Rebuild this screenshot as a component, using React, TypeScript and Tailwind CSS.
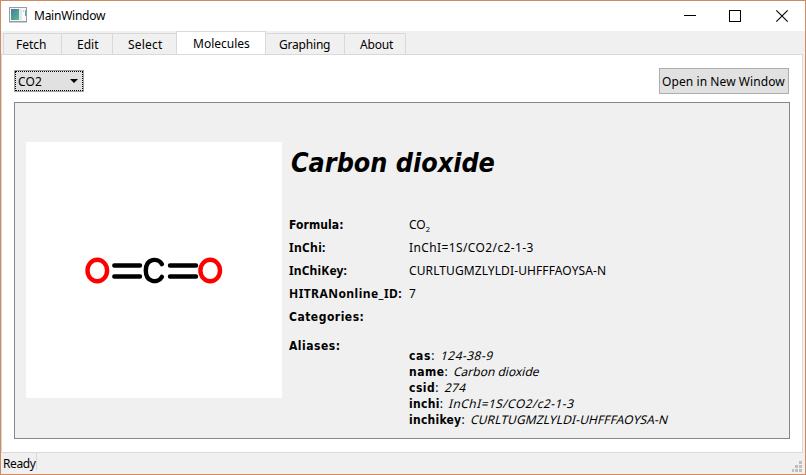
import React from "react";

const tabs = [
  { label: "Fetch", box: "w-[58px] pl-[12px]", text: "" },
  { label: "Edit", box: "w-[51px] pl-[15px]", text: "" },
  { label: "Select", box: "w-[64px] pl-[15px]", text: "tracking-[0.2px]" },
  { label: "Molecules", box: "w-[90px] pl-[16px]", text: "", active: true },
  { label: "Graphing", box: "w-[79px] pl-[13px]", text: "tracking-[-0.2px]" },
  { label: "About", box: "w-[61px] pl-[15px]", text: "tracking-[-0.2px]" },
];

const condensed = "font-['DejaVu_Sans_Condensed','DejaVu_Sans',sans-serif]";

const fields = [
  { label: "Formula:", labelCls: `${condensed} tracking-[0.1px]`, value: <>CO<span className="relative top-[3px] text-[7.5px]">2</span></>, valueCls: "" },
  { label: "InChi:", labelCls: "tracking-[0.3px]", value: "InChI=1S/CO2/c2-1-3", valueCls: "tracking-[0.39px]" },
  { label: "InChiKey:", labelCls: "tracking-[0.15px]", value: "CURLTUGMZLYLDI-UHFFFAOYSA-N", valueCls: "tracking-[0.11px]" },
  { label: "HITRANonline_ID:", labelCls: "tracking-[0.45px]", value: "7", valueCls: "" },
  { label: "Categories:", labelCls: `${condensed} tracking-[0.5px]`, value: "", valueCls: "" },
];

const aliases = [
  { name: "cas", value: "124-38-9", nameCls: "tracking-[0.7px]", valueCls: "tracking-[0.45px]" },
  { name: "name", value: "Carbon dioxide", nameCls: "tracking-[0.5px]", valueCls: "" },
  { name: "csid", value: "274", nameCls: "tracking-[0.5px]", valueCls: "tracking-[0.2px]" },
  { name: "inchi", value: "InChI=1S/CO2/c2-1-3", nameCls: "tracking-[0.3px]", valueCls: "tracking-[0.42px]" },
  { name: "inchikey", value: "CURLTUGMZLYLDI-UHFFFAOYSA-N", nameCls: "tracking-[0.25px]", valueCls: "tracking-[0.11px]" },
];

function AppIcon() {
  return (
    <svg width="20" height="17" viewBox="0 0 20 17" shapeRendering="crispEdges">
      <defs>
        <linearGradient id="screen" x1="0" y1="0" x2="1" y2="1">
          <stop offset="0" stopColor="#467ba5" />
          <stop offset="1" stopColor="#5cb88a" />
        </linearGradient>
      </defs>
      <rect x="1.5" y="0.5" width="17" height="14" fill="#f4f6f8" stroke="#9a9da0" />
      <rect x="1" y="15" width="18" height="1" fill="#c8cbd0" />
      <rect x="3" y="2" width="8" height="11" fill="url(#screen)" />
      <rect x="11" y="2" width="3" height="11" fill="#e1e8ee" />
      <rect x="14" y="2" width="4" height="11" fill="#f8fafb" />
      <rect x="15" y="3" width="1" height="2" fill="#b7d3d2" />
      <rect x="17" y="3" width="1" height="6" fill="#62a89a" />
    </svg>
  );
}

function TitleBar() {
  return (
    <header className="flex h-[30px] shrink-0 items-start bg-white">
      <div className="pt-[6px] pl-[7px]"><AppIcon /></div>
      <span className="mt-[5px] ml-[6px] text-[12px] leading-[20px] tracking-[-0.25px]">MainWindow</span>
      <svg className="mt-[8px] mr-[15px] ml-auto" width="106" height="14" viewBox="0 0 106 14" fill="none" stroke="#000">
        <path d="M0 6.5h12" shapeRendering="crispEdges" />
        <path d="M45.5 1.5h11v11h-11z" shapeRendering="crispEdges" />
        <path d="M92.3 1.3l11.4 11.4M103.7 1.3L92.3 12.7" strokeWidth="1.1" />
      </svg>
    </header>
  );
}

function TabBar() {
  return (
    <nav className="flex h-[23px] shrink-0 items-end bg-[#f0f0f0] pl-px">
      {tabs.map((t, i) =>
        t.active ? (
          <div key={t.label} className={`${t.box} -mb-px h-[24px] border border-b-0 border-[#d9d9d9] bg-white text-[12px] leading-[23px]`}>
            <span className={t.text}>{t.label}</span>
          </div>
        ) : (
          <div key={t.label} className={`${t.box} h-[21px] border-t border-[#d9d9d9] text-[12px] leading-[22px] ${i === 0 ? "ml-px" : ""} ${i < 3 ? "border-l" : "border-r"}`}>
            <span className={t.text}>{t.label}</span>
          </div>
        )
      )}
    </nav>
  );
}

function Molecule() {
  return (
    <svg className="block shrink-0 bg-white" width="256" height="256" viewBox="0 0 256 256" fill="none">
      <g stroke="#ff0000" strokeWidth="4.4">
        <ellipse cx="71.3" cy="128.5" rx="9.8" ry="10.8" />
        <ellipse cx="184.2" cy="128.5" rx="9.8" ry="10.8" />
      </g>
      <g stroke="#000" strokeWidth="4.4" strokeLinecap="round">
        <path d="M88.3 123.5H114M88.3 134.5H114M144 123.5H170M144 134.5H170" />
        <path d="M135.9 122.2C132 115.5 119.8 116 119.8 128.5C119.8 141 132 141.5 135.9 134.8" />
      </g>
    </svg>
  );
}

export default function App() {
  return (
    <div className="flex h-[475px] w-[806px] flex-col overflow-hidden border border-[#cf8a62] bg-[#f0f0f0] font-['Noto_Sans','Open_Sans',sans-serif] text-[12px] text-black">
      <TitleBar />
      <TabBar />
      <main className="mr-[2px] flex h-[399px] shrink-0 flex-col border border-[#d9d9d9] bg-white px-[12px]">
        <div className="flex h-[47px] shrink-0 items-start justify-between pt-[13px]">
          <div className="mt-[2px] flex h-[22px] w-[70px] items-center justify-between border border-[#a0a0a0] bg-[#e1e1e1]">
            <div className="flex h-full w-full items-center justify-between border border-dotted border-black pr-[4px] pl-[2px]">
              <span className="pt-[2px] leading-[18px] tracking-[0.2px]">CO2</span>
              <svg width="8" height="4" viewBox="0 0 8 4"><path d="M0 0h8L4 4z" /></svg>
            </div>
          </div>
          <button className="mr-px h-[26px] w-[130px] border border-[#adadad] bg-[#e1e1e1] pt-px text-left text-[12px] leading-[24px] whitespace-nowrap">
            <span className="pl-[2px] tracking-[0.08px]">Open in New Window</span>
          </button>
        </div>
        <section className="flex h-[337px] w-[776px] shrink-0 border border-[#828790] bg-[#f0f0f0] pt-[39px] pl-[11px]">
          <Molecule />
          <div className="flex flex-col pl-[7px]">
            <h1 className={`h-[71px] pt-px pl-[2px] ${condensed} text-[26.7px] leading-[40px] font-bold whitespace-nowrap italic`}>Carbon dioxide</h1>
            <dl>
              {fields.map((f) => (
                <div key={f.label} className="flex h-[23px] leading-[23px]">
                  <dt className="w-[120px] shrink-0 font-bold whitespace-nowrap"><span className={f.labelCls}>{f.label}</span></dt>
                  <dd className="whitespace-nowrap"><span className={f.valueCls}>{f.value}</span></dd>
                </div>
              ))}
              <div className="flex pt-[6px]">
                <dt className="w-[120px] shrink-0 leading-[23px] font-bold"><span className={`${condensed} tracking-[0.5px]`}>Aliases:</span></dt>
                <dd className="pt-[14px]">
                  {aliases.map((a) => (
                    <div key={a.name} className="flex h-[16px] items-baseline leading-[16px] whitespace-nowrap">
                      <b className={`${condensed} ${a.nameCls}`}>{a.name}</b>
                      <span className="tracking-[0.5px]">:</span>
                      <span className={`${a.valueCls} ml-[6px] -skew-x-[14deg]`}>{a.value}</span>
                    </div>
                  ))}
                </dd>
              </div>
            </dl>
          </div>
        </section>
      </main>
      <footer className="flex h-[20px] shrink-0 items-start justify-between">
        <div className="h-[17px] w-[36px] border-r border-[#d9d9d9] pl-[2px] leading-[22px] tracking-[-0.4px]">Ready</div>
        <svg className="mt-[8px] mr-[3px]" width="10" height="11" viewBox="0 0 10 11" fill="#bfbfbf" shapeRendering="crispEdges">
          <path d="M7 0h3v3H7zM3 4h3v3H3zM7 4h3v3H7zM0 8h2v3H0zM3 8h3v3H3zM7 8h3v3H7z" />
        </svg>
      </footer>
    </div>
  );
}
